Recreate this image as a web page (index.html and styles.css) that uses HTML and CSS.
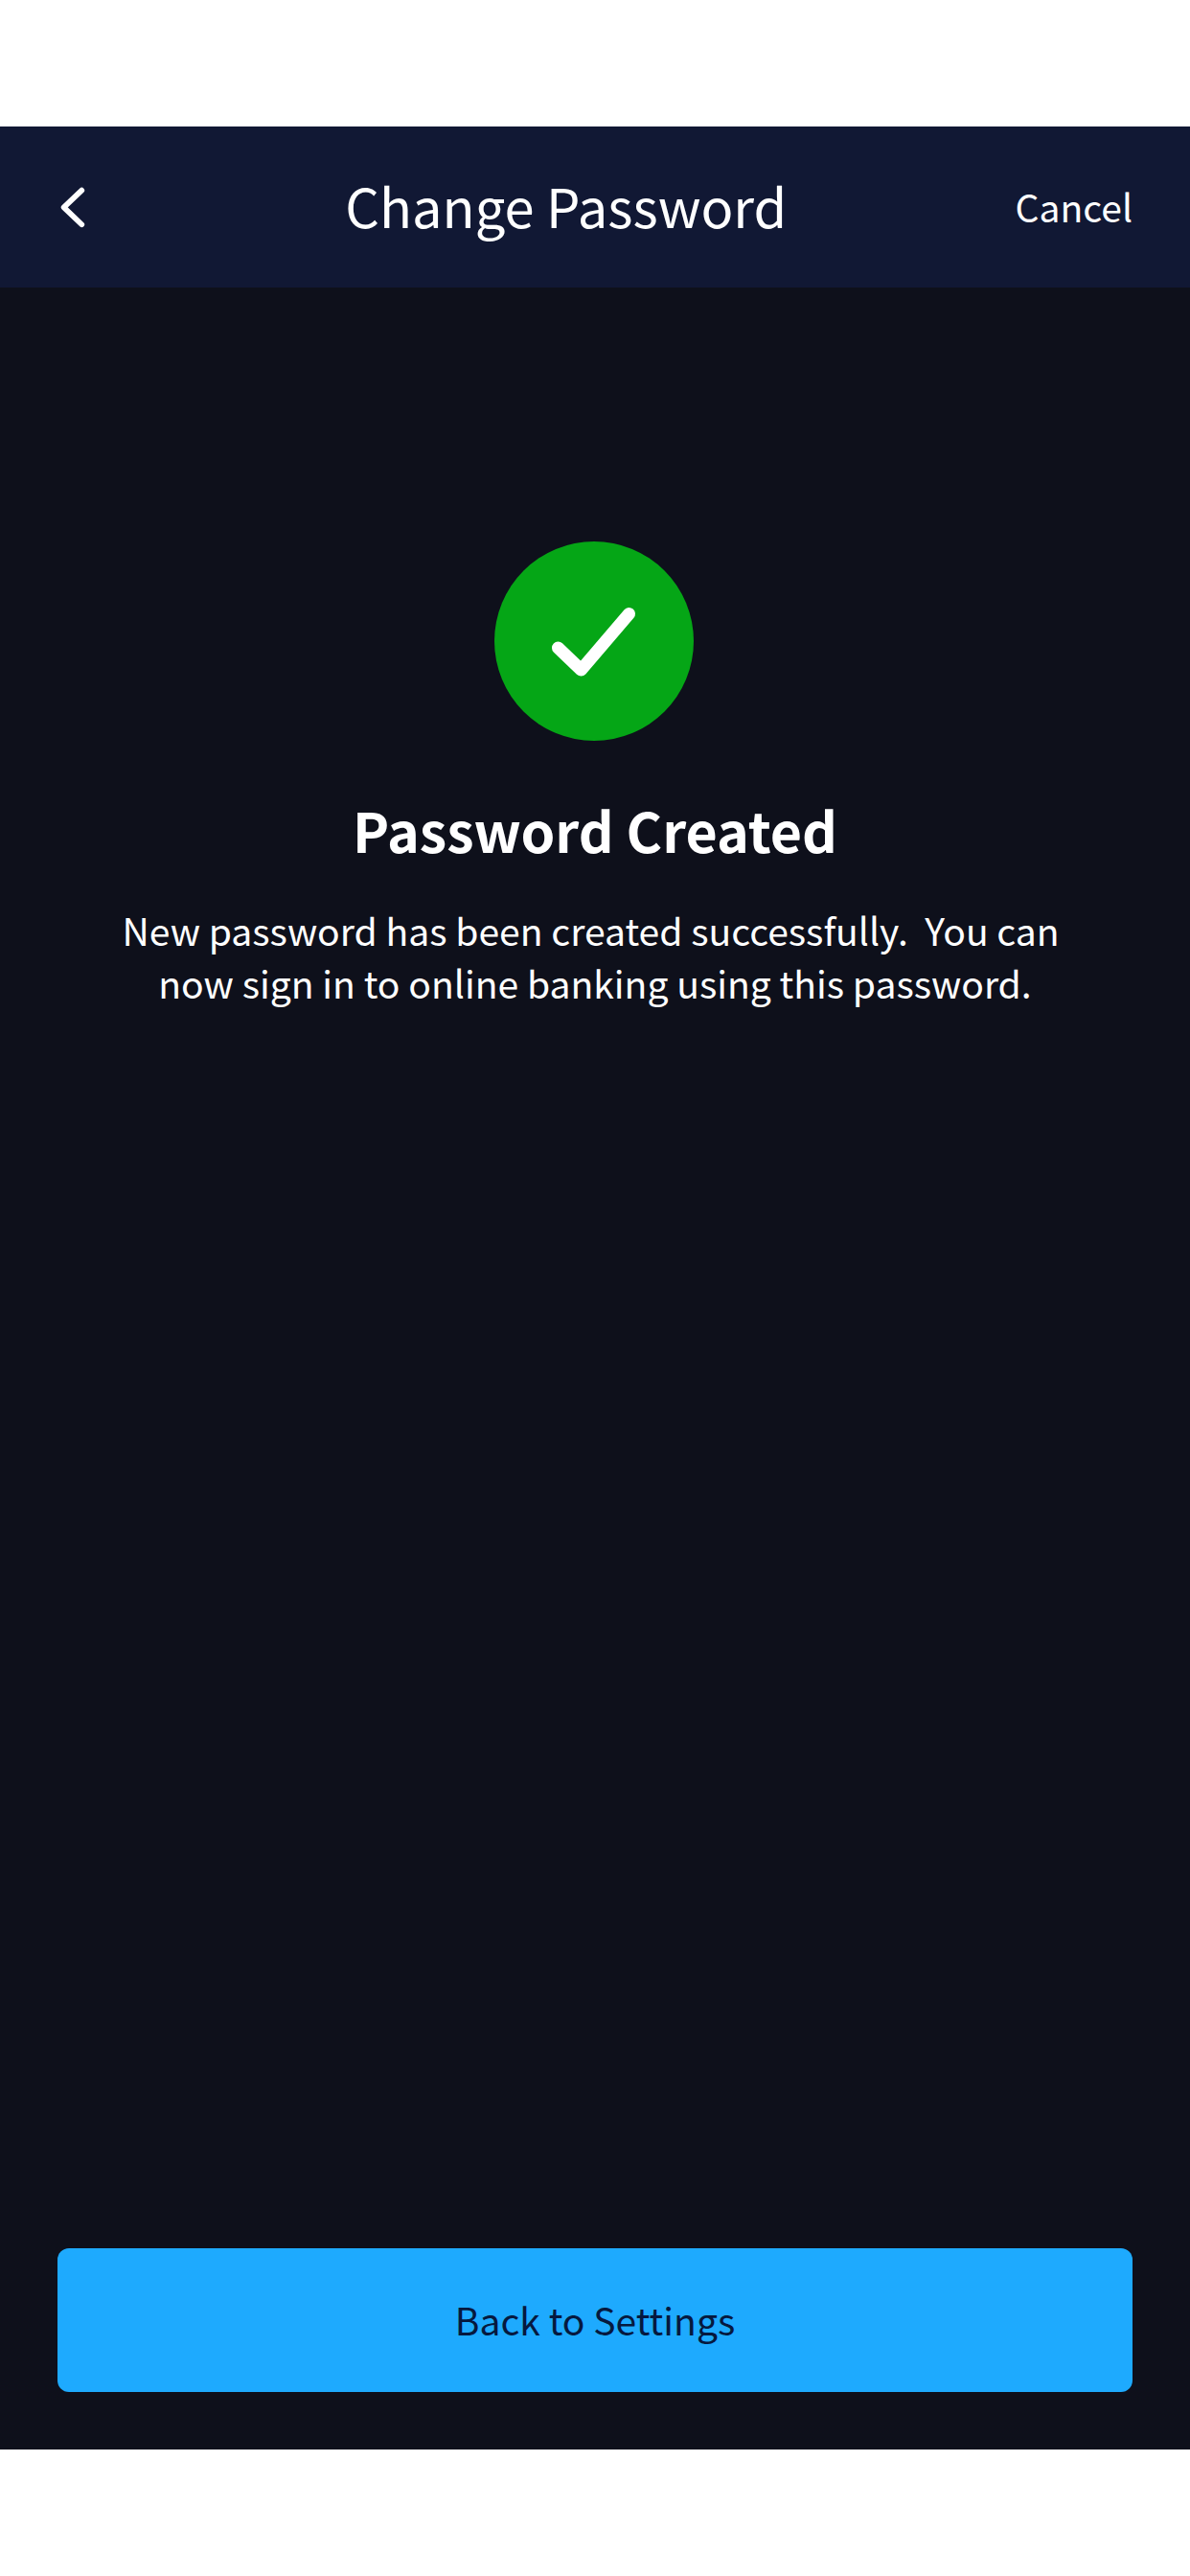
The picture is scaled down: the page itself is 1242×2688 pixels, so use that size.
FILE: index.html
```html
<!DOCTYPE html>
<html lang="en">
<head>
<meta charset="utf-8">
<title>Change Password</title>
<link rel="stylesheet" href="styles.css">
</head>
<body>
<div class="screen">
  <header class="topbar">
    <button class="back" aria-label="Back">
      <svg width="32" height="48" viewBox="0 0 32 48"><path d="M25.3 6.600 6.600 24.400 25.300 42.200" fill="none" stroke="#fff" stroke-width="5.7" stroke-linecap="round" stroke-linejoin="round"/></svg>
    </button>
    <div class="title">Change Password</div>
    <button class="cancel">Cancel</button>
  </header>
  <main class="content">
    <svg class="badge" width="208" height="208" viewBox="0 0 208 208"><circle cx="104" cy="104" r="104" fill="#05a616"/><path d="M66.500 111 90.500 134 140.500 75.500" fill="none" stroke="#fff" stroke-width="13" stroke-linecap="round" stroke-linejoin="round"/></svg>
    <h1 class="heading">Password Created</h1>
    <p class="message">New password has been created successfully.&nbsp; You can&nbsp;<br>now sign in to online banking using this password.</p>
  </main>
  <footer class="actions">
    <button class="primary">Back to Settings</button>
  </footer>
</div>
</body>
</html>
```
FILE: styles.css
```css
* { box-sizing: border-box; }
body {
  margin: 0;
  padding: 132px 0;
  background: #fff;
  color: #fff;
  font-family: "Noto Sans CJK SC", sans-serif;
}
button {
  border: 0;
  padding: 0;
  background: none;
  color: inherit;
  font: inherit;
}
.screen {
  display: flex;
  flex-direction: column;
  height: 2424px;
  background: #0e101b;
}
.topbar {
  display: flex;
  justify-content: space-between;
  align-items: center;
  height: 168px;
  padding: 0 60px;
  background: #111834;
}
.back { display: flex; width: 62px; }
.title {
  padding: 0 0 4px;
  font-size: 56px;
  line-height: 80px;
}
.cancel {
  padding-bottom: 2px;
  font-size: 39.1px;
  line-height: 60px;
}
.content {
  flex: 1;
  display: flex;
  flex-direction: column;
  align-items: center;
  padding-top: 265px;
  text-align: center;
}
.badge { margin-right: 2px; }
.heading {
  margin: 52px 0 37px;
  font-size: 57.3px;
  font-weight: 700;
  line-height: 81px;
}
.message {
  margin: 0;
  font-size: 39.1px;
  line-height: 55px;
}
.actions { padding: 0 60px 60px; }
.primary {
  width: 100%;
  height: 150px;
  padding-bottom: 2px;
  border-radius: 12px;
  background: #1eaafe;
  color: #06193f;
  font-size: 39.1px;
}
```
